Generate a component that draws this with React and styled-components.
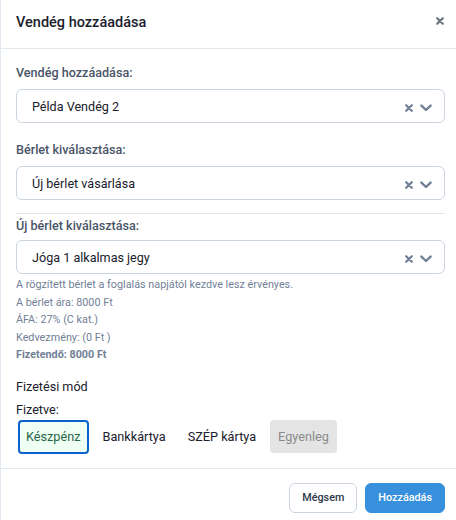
import React from "react";
import styled, { createGlobalStyle } from "styled-components";

const Global = createGlobalStyle`
  html, body { margin: 0; padding: 0; background: #fff; }
  body { font-family: Roboto, "Noto Sans", sans-serif; color: #1a202c; }
  * { box-sizing: border-box; }
`;

const Modal = styled.div`
  width: 456px;
  height: 520px;
  border-left: 1px solid #e2e8f0;
  display: flex;
  flex-direction: column;
  background: #fff;
`;

const Header = styled.div`
  height: 49px;
  flex-shrink: 0;
  border-bottom: 1px solid #e2e8f0;
  display: flex;
  align-items: center;
  justify-content: space-between;
  padding: 0 12px 3px 15px;
`;

const Title = styled.h2`
  margin: 0;
  font-size: 14.5px;
  font-weight: 500;
  color: #1a202c;
`;

const Close = styled.button`
  border: 0;
  background: none;
  padding: 0;
  width: 9px;
  height: 9px;
  display: flex;
  align-items: center;
  justify-content: center;
  margin-bottom: 4px;
  cursor: pointer;
`;

const Body = styled.div`
  padding: 14px 11px 0 15px;
  flex: 1;
  min-height: 0;
`;

const Label = styled.div`
  font-size: 12.6px;
  font-weight: 500;
  color: #4a5568;
  height: 19px;
  line-height: 19px;
  margin-bottom: ${(p) => p.$mb ?? 6}px;
`;

const SelectBox = styled.div`
  height: 34px;
  border: 1px solid #cbd5e0;
  border-radius: 6px;
  display: flex;
  align-items: center;
  padding: 0 12px 0 15px;
  font-size: 12.6px;
  color: #1a202c;
  margin-bottom: ${(p) => p.$mb || 0}px;
`;

const Value = styled.span`
  flex: 1;
`;

const Icons = styled.span`
  display: flex;
  align-items: center;
  gap: 7px;
  padding-top: 4px;
`;

const Divider = styled.hr`
  border: 0;
  border-top: 1px solid #e2e8f0;
  margin: 0 0 2px 0;
`;

const Help = styled.div`
  font-size: 10.8px;
  color: #718096;
  line-height: 17.5px;
  font-weight: ${(p) => (p.$bold ? 700 : 400)};
`;

const HelpBlock = styled.div`
  margin-top: 2px;
`;

const Plain = styled.div`
  font-size: 12.6px;
  color: #1a202c;
  line-height: 20px;
  margin-top: ${(p) => p.$mt || 0}px;
`;

const PayRow = styled.div`
  display: flex;
  align-items: center;
  gap: 6px;
  margin-left: 2px;
`;

const PayBtn = styled.button`
  font-family: inherit;
  font-size: 12.7px;
  height: ${(p) => (p.$active ? 34 : 33)}px;
  padding: 0 6px;
  border-radius: 4px;
  border: ${(p) => (p.$active ? "2px solid #0b63ce" : "2px solid transparent")};
  background: ${(p) => (p.$active ? "#f0fff4" : p.$disabled ? "#e4e4e4" : "transparent")};
  color: ${(p) => (p.$active ? "#276749" : p.$disabled ? "#8a8a8a" : "#1a202c")};
`;

const Footer = styled.div`
  border-top: 1px solid #e2e8f0;
  height: 52px;
  flex-shrink: 0;
  display: flex;
  justify-content: flex-end;
  align-items: center;
  gap: 8px;
  padding: 6px 11px 0 0;
`;

const FootBtn = styled.button`
  font-family: inherit;
  font-size: 10.8px;
  font-weight: 500;
  height: 30px;
  padding: 0 12px;
  border-radius: 6px;
  border: 1px solid ${(p) => (p.$primary ? "#3690dc" : "#cbd5e0")};
  background: ${(p) => (p.$primary ? "#3690dc" : "#fff")};
  color: ${(p) => (p.$primary ? "#fff" : "#2d3748")};
`;

const XIcon = ({ size = 8, color = "#718096", w = 2.4 }) => (
  <svg width={size} height={size} viewBox="0 0 10 10">
    <path d="M1.5 1.5 L8.5 8.5 M8.5 1.5 L1.5 8.5" stroke={color} strokeWidth={w} strokeLinecap="round" />
  </svg>
);

const Chevron = () => (
  <svg width="12" height="8" viewBox="0 0 12 8">
    <path d="M1.4 1.6 L6 6 L10.6 1.6" stroke="#718096" strokeWidth="2.4" fill="none" strokeLinecap="round" strokeLinejoin="round" />
  </svg>
);

const Select = ({ value, mb }) => (
  <SelectBox $mb={mb}>
    <Value>{value}</Value>
    <Icons>
      <XIcon w={2.8} />
      <Chevron />
    </Icons>
  </SelectBox>
);

export default function App() {
  return (
    <>
      <Global />
      <Modal>
        <Header>
          <Title>Vendég hozzáadása</Title>
          <Close aria-label="close">
            <XIcon size={8} color="#6b7280" w={2.6} />
          </Close>
        </Header>
        <Body>
          <Label $mb={7}>Vendég hozzáadása:</Label>
          <Select value="Példa Vendég 2" mb={17} />
          <Label $mb={7}>Bérlet kiválasztása:</Label>
          <Select value="Új bérlet vásárlása" mb={13} />
          <Divider />
          <Label $mb={5}>Új bérlet kiválasztása:</Label>
          <Select value="Jóga 1 alkalmas jegy" />
          <HelpBlock>
            <Help>A rögzített bérlet a foglalás napjától kezdve lesz érvényes.</Help>
            <Help>A bérlet ára: 8000 Ft</Help>
            <Help>ÁFA: 27% (C kat.)</Help>
            <Help>Kedvezmény: (0 Ft )</Help>
            <Help $bold>Fizetendő: 8000 Ft</Help>
          </HelpBlock>
          <Plain $mt={13}>Fizetési mód</Plain>
          <Plain $mt={3}>Fizetve:</Plain>
          <PayRow>
            <PayBtn $active>Készpénz</PayBtn>
            <PayBtn>Bankkártya</PayBtn>
            <PayBtn>SZÉP kártya</PayBtn>
            <PayBtn $disabled disabled>Egyenleg</PayBtn>
          </PayRow>
        </Body>
        <Footer>
          <FootBtn>Mégsem</FootBtn>
          <FootBtn $primary>Hozzáadás</FootBtn>
        </Footer>
      </Modal>
    </>
  );
}
